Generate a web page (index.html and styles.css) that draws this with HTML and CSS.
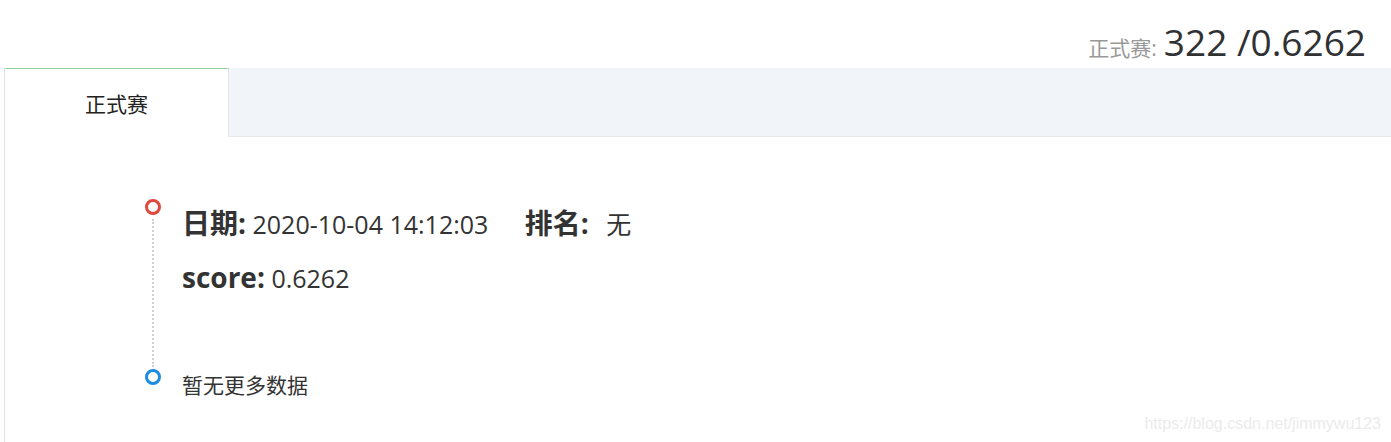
FILE: index.html
```html
<!DOCTYPE html>
<html lang="zh-CN">

<head>
  <meta charset="UTF-8" />
  <meta name="viewport" content="width=device-width, initial-scale=1.0" />
  <title>比赛成绩</title>
  <link rel="stylesheet" href="styles.css">
</head>

<body>

  <!-- Score summary -->
  <div class="score-head">
    <span class="score-label">正式赛:</span>
    <span class="score-value">322 /0.6262</span>
  </div>

  <!-- Tabs panel -->
  <div class="panel">
    <div class="tabs">
      <div class="tab active">正式赛</div>
    </div>

    <div class="panel-body">
      <ul class="timeline">
        <li class="tl-item">
          <div class="tl-axis">
            <span class="tl-dot red"></span>
            <span class="tl-line"></span>
          </div>
          <div class="tl-content">
            <p class="tl-row">
              <b>日期:</b> <span class="val">2020-10-04 14:12:03</span>
              <b class="rank">排名:</b> <span class="val rank-val">无</span>
            </p>
            <p class="tl-row">
              <b>score:</b> <span class="val">0.6262</span>
            </p>
          </div>
        </li>
        <li class="tl-item last">
          <div class="tl-axis">
            <span class="tl-dot blue"></span>
          </div>
          <div class="tl-content">
            <p class="no-more">暂无更多数据</p>
          </div>
        </li>
      </ul>
    </div>
  </div>

  <div class="watermark">https://blog.csdn.net/jimmywu123</div>

</body>

</html>
```

FILE: styles.css
```css
* {
  margin: 0;
  padding: 0;
  box-sizing: border-box;
}

body {
  font-family: 'Open Sans', 'Noto Sans CJK SC', sans-serif;
  background: #fff;
  color: #333;
  height: 442px;
  overflow: hidden;
}

.score-head {
  height: 68px;
  display: flex;
  justify-content: flex-end;
  align-items: baseline;
  padding: 23px 25px 0 0;
}

.score-label {
  font-size: 21px;
  color: #999;
  margin-right: 7px;
}

.score-value {
  font-size: 37px;
  color: #303133;
  line-height: 1;
}

.panel {
  margin-left: 4px;
  border-left: 1px solid #e4e4e4;
  height: 374px;
}

.tabs {
  display: flex;
  height: 69px;
  background: #f1f4f9;
  border-bottom: 1px solid #e4e7ed;
}

.tab {
  width: 224px;
  display: flex;
  align-items: center;
  justify-content: center;
  font-size: 21px;
  color: #222;
}

.tab.active {
  background: #fff;
  border-top: 1px solid #8fd19e;
  border-right: 1px solid #e4e7ed;
  margin-bottom: -1px;
}

.panel-body {
  padding: 62px 0 0 140px;
}

.timeline {
  list-style: none;
}

.tl-item {
  display: flex;
}

.tl-axis {
  width: 16px;
  display: flex;
  flex-direction: column;
  align-items: center;
}

.tl-dot {
  width: 16px;
  height: 16px;
  border-radius: 50%;
  border: 3px solid #e0483e;
  background: #fff;
  flex-shrink: 0;
}

.tl-dot.blue {
  border-color: #1c8be2;
}

.tl-line {
  flex: 1;
  width: 2px;
  border-left: 2px dotted #d0d0d0;
  margin: 4px 0 2px;
}

.tl-content {
  padding-left: 21px;
  padding-top: 6px;
  padding-bottom: 73px;
}

.tl-item.last .tl-content {
  padding: 4px 0 0 21px;
}

.tl-row {
  font-size: 25px;
  line-height: 36px;
  margin-bottom: 17px;
}

.tl-row:last-child {
  margin-bottom: 0;
}

.tl-row b {
  font-size: 28px;
  font-weight: 700;
}

.tl-row .rank {
  margin-left: 30px;
}

.tl-row .rank-val {
  margin-left: 11px;
}

.no-more {
  font-size: 21px;
  line-height: 24px;
  color: #333;
}

.watermark {
  position: absolute;
  right: 10px;
  bottom: 9px;
  font-family: 'Liberation Sans', sans-serif;
  font-size: 16px;
  color: #ebebeb;
}
```
